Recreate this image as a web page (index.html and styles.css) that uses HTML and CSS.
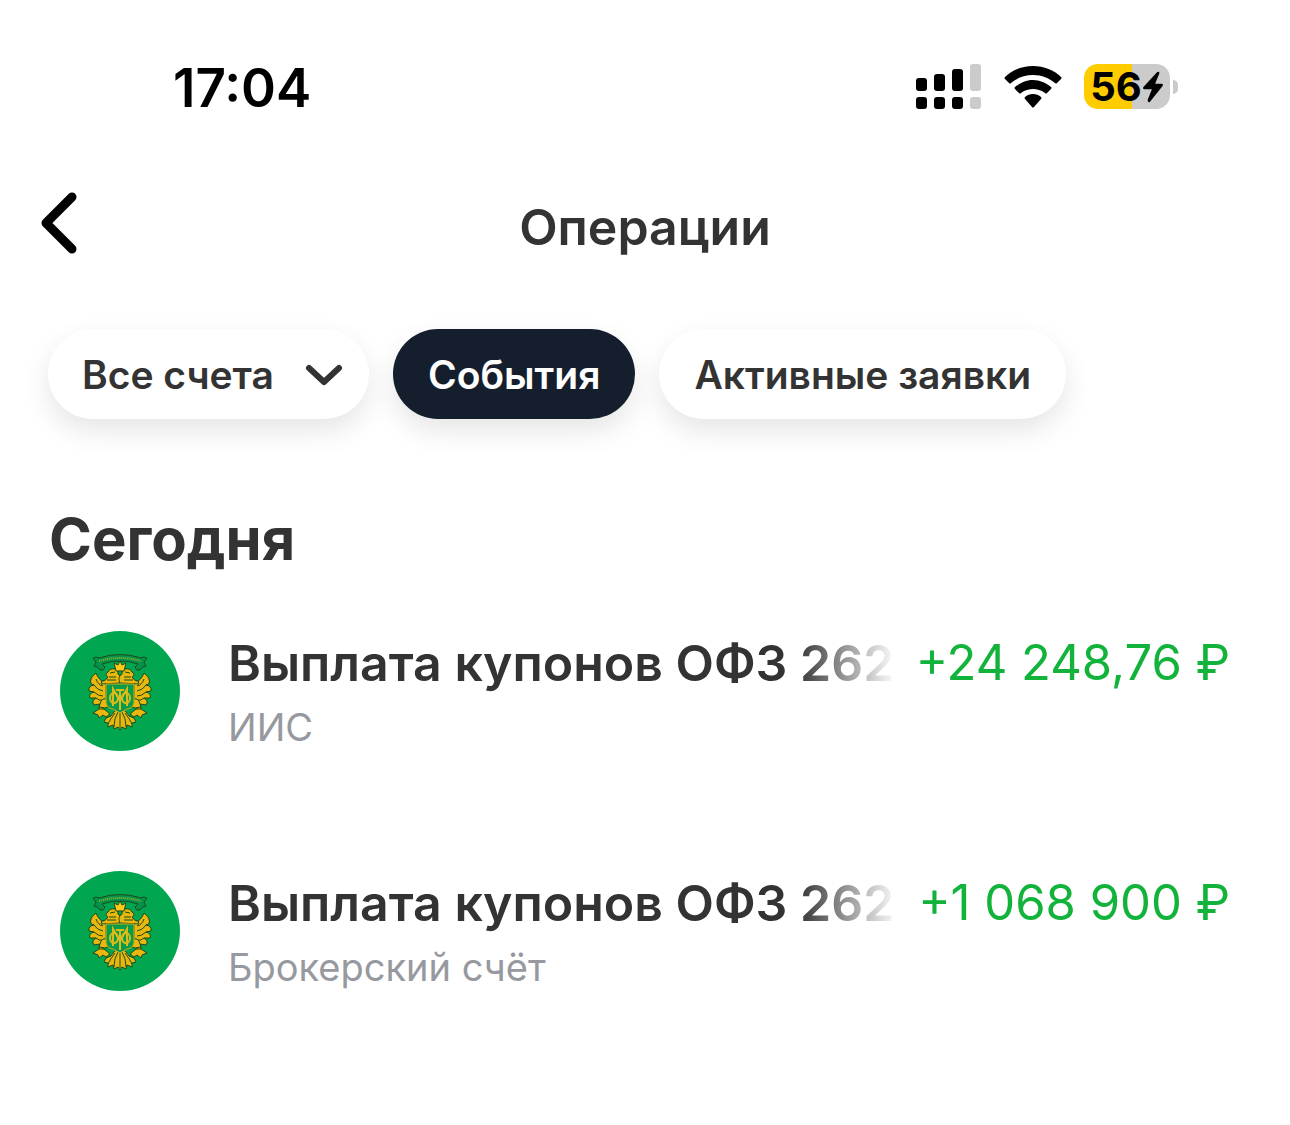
FILE: index.html
```
<!DOCTYPE html>
<html lang="ru">
<head>
    <meta charset="UTF-8">
    <meta name="viewport" content="width=device-width, initial-scale=1.0">
    <title>Операции</title>
    <link rel="stylesheet" href="styles.css">
</head>
<body>

    <!-- Emblem used in the list -->
    <svg class="sprite" width="0" height="0" aria-hidden="true">
        <symbol id="emblem" viewBox="0 0 120 120">
            <circle cx="60" cy="60" r="60" fill="#03a650"/>
            <g stroke="#1d4a1a" stroke-width="1" stroke-linejoin="round">
                <!-- ribbon -->
                <path fill="#05924a" d="M33 27 Q36 25 39 27 Q60 20 81 27 Q84 25 87 27 L84 31 L86 35 Q82 35 80 39 Q76 40 75 36 L78 33 Q60 27 42 33 L45 36 Q44 40 40 39 Q38 35 34 35 L36 31 Z"/>
                <path fill="none" stroke="#8fae2a" stroke-dasharray="1 1" stroke-width="2" d="M39 30 Q60 24 81 30"/>
                <!-- wings -->
                <g id="wing" fill="#e9b80e">
                    <path d="M36 42 Q29 47 31 53 L34 54 Q28 55 29 60 L34 61 Q28 63 30 67 L36 67 Q31 70 34 74 L40 73 Q37 78 42 80 L46 70 L46 52 Q39 50 36 42 Z"/>
                    <path fill="none" d="M36 48 Q38 54 43 55 M34 54 Q37 59 43 60 M34 61 Q38 65 43 65 M36 67 Q39 70 43 69"/>
                    <path d="M41 53 L42 50 Q45 51 48 46 Q44 44 48 41 Q50 37 55 38 Q59 40 58 43 Q63 46 60 52 Z"/>
                    <path fill="none" d="M50 42 L55 41 M49 46 L56 46 M47 49 L56 49"/>
                    <path d="M41 70 Q44 66 47 69 L50 75 L45 77 L39 76 Z"/>
                    <path d="M44 78 Q38 77 36 80 L33 82 L38 84 L39 87 L43 84 L46 86 L50 83 Z"/>
                </g>
                <use href="#wing" transform="translate(120 0) scale(-1 1)"/>
                <!-- crown -->
                <path fill="#ffca17" d="M56 40 L54 32 L58 34 L60 30 L62 34 L66 32 L64 40 Z"/>
                <!-- tail -->
                <path fill="#e9b80e" d="M60 77 Q53 80 51 85 L46 87 L44 91 L48 92 L48 96 L53 94 L54 98 L58 96 L60 99 L62 96 L66 98 L67 94 L72 96 L72 92 L76 91 L74 87 L69 85 Q67 80 60 77 Z"/>
                <path fill="none" d="M60 80 V97 M58 81 Q54 87 54 96 M62 81 Q66 87 66 96 M55 82 Q51 87 48 93 M65 82 Q69 87 72 93"/>
                <!-- shield -->
                <path fill="#099a4c" stroke="#d8ac14" stroke-width="1" d="M46 53 H74 V72 Q73 77 67 78 L60 82 L53 78 Q47 77 46 72 Z"/>
            </g>
            <g fill="none" stroke="#dcbc19" stroke-width="2">
                <path d="M53 75 V58 L60 70 L67 58 V75 M60 59 V79 M56 59 H64"/>
                <ellipse cx="54" cy="67" rx="4" ry="5"/>
                <ellipse cx="66" cy="67" rx="4" ry="5"/>
            </g>
        </symbol>
    </svg>

    <div class="status-bar">
        <time class="status-time">17:04</time>
        <div class="status-icons">
            <svg class="signal" width="66" height="46" viewBox="0 0 66 46" aria-hidden="true">
                <rect x="0" y="14" width="11" height="13" rx="3"/>
                <rect x="18" y="10" width="11" height="17" rx="3"/>
                <rect x="36" y="5" width="11" height="22" rx="3"/>
                <rect x="54" y="0" width="11" height="27" rx="3" fill="#cbcbcb"/>
                <rect x="0" y="33" width="11" height="12" rx="3"/>
                <rect x="18" y="33" width="11" height="12" rx="3"/>
                <rect x="36" y="33" width="11" height="12" rx="3"/>
                <rect x="54" y="33" width="11" height="12" rx="3" fill="#cbcbcb"/>
            </svg>
            <svg class="wifi" width="58" height="44" viewBox="0 0 58 44" aria-hidden="true">
                <path d="M29 1 C18 1 8 5 1 12 Q0 13 1 14 L5 18 Q6 19 7 18 C13 13 20 10 29 10 C38 10 45 13 51 18 Q52 19 53 18 L57 14 Q58 13 57 12 C50 5 40 1 29 1 Z"/>
                <path d="M29 15 C22 15 16 18 11 22 Q10 23 11 24 L15 28 Q16 29 17 28 C21 25 25 24 29 24 C33 24 37 25 41 28 Q42 29 43 28 L47 24 Q48 23 47 22 C42 18 36 15 29 15 Z"/>
                <path d="M29 29 C26 29 23 30 21 32 Q20 33 21 34 L28 42 Q29 43 30 42 L37 34 Q38 33 37 32 C35 30 32 29 29 29 Z"/>
            </svg>
            <div class="battery">
                <span class="battery-level">56</span>
                <svg width="22" height="32" viewBox="0 0 20 30" aria-hidden="true">
                    <path d="M14 1 L1 15 Q0 17 2 17 L9 17 L5 27 Q5 30 7 29 L19 14 Q20 12 18 12 L12 12 L16 2 Q16 0 14 1 Z"/>
                </svg>
            </div>
            <span class="battery-cap"></span>
        </div>
    </div>

    <header class="header">
        <button class="btn-back" type="button" aria-label="Назад">
            <svg width="36" height="62" viewBox="0 0 36 62" aria-hidden="true">
                <path d="M31 5 L5 31 L31 57" fill="none" stroke="#000" stroke-width="9" stroke-linecap="round" stroke-linejoin="round"/>
            </svg>
        </button>
        <h1>Операции</h1>
    </header>

    <div class="filters">
        <div class="select-wrap">
            <select class="chip chip-select" aria-label="Счёт">
                <option>Все счета</option>
            </select>
            <svg class="chevron" width="38" height="24" viewBox="0 0 38 24" aria-hidden="true">
                <path d="M4 5 L19 19 L34 5" fill="none" stroke="#333" stroke-width="6" stroke-linecap="round" stroke-linejoin="round"/>
            </svg>
        </div>
        <button class="chip chip-active" type="button">События</button>
        <button class="chip" type="button">Активные заявки</button>
    </div>

    <main class="operations">
        <h2>Сегодня</h2>
        <ul class="list">
            <li class="item">
                <svg class="avatar" aria-hidden="true"><use href="#emblem"/></svg>
                <div class="item-body">
                    <div class="item-row">
                        <span class="item-name">Выплата купонов ОФЗ 262</span>
                        <span class="item-sum">+24 248,76 ₽</span>
                    </div>
                    <div class="item-account">ИИС</div>
                </div>
            </li>
            <li class="item">
                <svg class="avatar" aria-hidden="true"><use href="#emblem"/></svg>
                <div class="item-body">
                    <div class="item-row">
                        <span class="item-name">Выплата купонов ОФЗ 262</span>
                        <span class="item-sum">+1 068 900 ₽</span>
                    </div>
                    <div class="item-account">Брокерский счёт</div>
                </div>
            </li>
        </ul>
    </main>

</body>
</html>
```

FILE: styles.css
```
* {
    box-sizing: border-box;
}
body {
    font-family: Inter, "Liberation Sans", sans-serif;
    margin: 0;
    padding: 0;
    background-color: #fff;
    color: #333;
}
.sprite {
    position: absolute;
}
/* Status bar */
.status-bar {
    display: flex;
    justify-content: space-between;
    align-items: center;
    padding: 56px 112px 0 173px;
    color: #000;
}
.status-time {
    font-size: 53px;
    line-height: 64px;
    font-weight: 600;
}
.status-icons {
    display: flex;
    align-items: center;
    padding-bottom: 3px;
}
.wifi {
    margin: 0 22px;
}
.battery {
    display: flex;
    align-items: center;
    justify-content: center;
    width: 86px;
    height: 45px;
    border-radius: 14px;
    background: linear-gradient(to right, #fc0 56%, #cbcbcb 56%);
}
.battery-level {
    font-size: 40px;
    line-height: 45px;
    font-weight: 700;
}
.battery-cap {
    width: 5px;
    height: 14px;
    margin-left: 3px;
    border-radius: 0 6px 6px 0;
    background-color: #cbcbcb;
}
/* Header */
.header {
    display: grid;
    grid-template-columns: 80px 1fr 80px;
    align-items: center;
    padding: 71px 41px 0;
}
.btn-back {
    display: flex;
    justify-self: start;
    padding: 0 0 8px;
    border: none;
    background: none;
    cursor: pointer;
}
.header h1 {
    margin: 0;
    font-size: 50px;
    line-height: 72px;
    font-weight: 600;
    text-align: center;
}
/* Filters */
.filters {
    display: flex;
    gap: 24px;
    padding: 66px 48px 0;
}
.chip {
    height: 90px;
    padding: 0 35px;
    border: none;
    border-radius: 45px;
    background-color: #fff;
    color: #333;
    box-shadow: 0 12px 28px rgba(0, 0, 0, 0.1);
    font-family: inherit;
    font-size: 39px;
    font-weight: 600;
    cursor: pointer;
}
.chip-active {
    background-color: #151e2c;
    color: #fff;
}
.select-wrap {
    position: relative;
}
.chip-select {
    appearance: none;
    padding: 0 95px 0 34px;
}
.chevron {
    position: absolute;
    top: 34px;
    right: 26px;
    pointer-events: none;
}
/* Operations */
.operations {
    padding: 83px 60px 0 49px;
}
.operations h2 {
    margin: 0;
    font-size: 58px;
    line-height: 74px;
    font-weight: 700;
}
.list {
    display: flex;
    flex-direction: column;
    gap: 120px;
    margin: 0;
    padding: 55px 0 0 11px;
    list-style: none;
}
.item {
    display: flex;
    gap: 48px;
}
.avatar {
    flex: none;
    width: 120px;
    height: 120px;
}
.item-body {
    flex: 1;
    min-width: 0;
}
.item-row {
    display: flex;
    gap: 20px;
    font-size: 50px;
    line-height: 64px;
    white-space: nowrap;
}
.item-name {
    flex: 1;
    min-width: 0;
    overflow: hidden;
    font-weight: 600;
    -webkit-mask-image: linear-gradient(to left, transparent, #000 100px);
    mask-image: linear-gradient(to left, transparent, #000 100px);
}
.item-sum {
    font-size: 49px;
    color: #12b33a;
}
.item-account {
    margin-top: 8px;
    font-size: 38px;
    line-height: 48px;
    color: #9799a0;
}
```
